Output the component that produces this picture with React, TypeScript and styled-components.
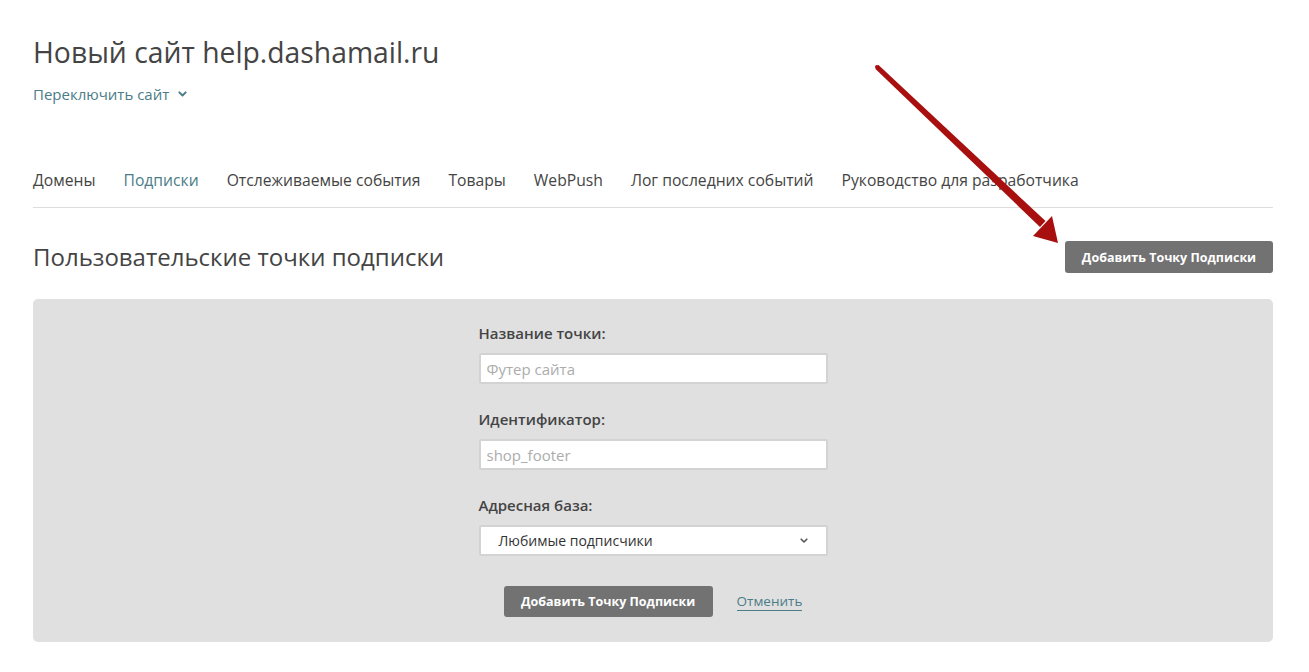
import React from "react";
import styled, { createGlobalStyle } from "styled-components";

const Global = createGlobalStyle`
  html, body { margin: 0; padding: 0; background: #fff; }
  body { font-family: "Open Sans", "Noto Sans", Arial, sans-serif; color: #444; }
  * { box-sizing: border-box; }
`;

const Page = styled.div`
  position: relative;
  padding: 34px 36px 30px 33px;
  min-height: 672px;
`;

const Title = styled.h1`
  margin: 0;
  font-size: 28.3px;
  line-height: 36px;
  font-weight: 400;
  color: #444;
`;

const Switch = styled.a`
  display: inline-flex;
  align-items: center;
  gap: 9px;
  margin-top: 14px;
  font-size: 15px;
  line-height: 20px;
  color: #4b7c88;
  text-decoration: none;
  cursor: pointer;
`;

const Nav = styled.nav`
  display: flex;
  gap: 28px;
  margin-top: 64px;
  padding-bottom: 16px;
  border-bottom: 1px solid #dddddd;
`;

const NavItem = styled.a<{ $active?: boolean }>`
  font-size: 15.7px;
  line-height: 22px;
  color: ${(p) => (p.$active ? "#4b7c88" : "#444")};
  text-decoration: none;
  cursor: pointer;
`;

const HeaderRow = styled.div`
  display: flex;
  align-items: center;
  justify-content: space-between;
  margin-top: 33px;
`;

const Heading = styled.h2`
  margin: 0;
  font-size: 24px;
  line-height: 32px;
  font-weight: 400;
  color: #444;
`;

const Button = styled.button<{ $h?: number; $w?: number }>`
  height: ${(p) => p.$h ?? 32}px;
  width: ${(p) => p.$w ?? 208}px;
  padding: 0;
  border: none;
  border-radius: 3px;
  background: #727272;
  color: #fff;
  font-family: "Open Sans", "Noto Sans", Arial, sans-serif;
  font-size: 12.5px;
  font-weight: 700;
  cursor: pointer;
`;

const Panel = styled.div`
  margin-top: 26px;
  background: #e0e0e0;
  border-radius: 5px;
  padding: 24px 0 25px;
  display: flex;
  justify-content: center;
`;

const Form = styled.div`
  width: 349px;
  display: flex;
  flex-direction: column;
`;

const Field = styled.div`
  display: flex;
  flex-direction: column;
  margin-bottom: 25px;
`;

const Label = styled.label`
  font-size: 15px;
  line-height: 20px;
  font-weight: 600;
  color: #444;
  margin-bottom: 10px;
`;

const Input = styled.input`
  display: block;
  height: 31px;
  width: 100%;
  margin: 0;
  border: 2px solid #d3d3d3;
  border-radius: 2px;
  background: #fff;
  padding: 0 6px;
  font-family: "Open Sans", "Noto Sans", Arial, sans-serif;
  font-size: 15px;
  color: #444;
  outline: none;
  &::placeholder { color: #acacac; }
`;

const Select = styled.div`
  height: 31px;
  width: 100%;
  border: 2px solid #d3d3d3;
  border-radius: 2px;
  background: #fff;
  padding: 0 18px 0 18px;
  display: flex;
  align-items: center;
  justify-content: space-between;
  font-size: 14px;
  color: #333;
`;

const Actions = styled.div`
  display: flex;
  justify-content: center;
  align-items: center;
  gap: 24px;
  margin-top: 5px;
`;

const Cancel = styled.a`
  font-size: 13.5px;
  line-height: 18px;
  color: #4b7c88;
  text-decoration: none;
  border-bottom: 1px solid #4b7c88;
  cursor: pointer;
`;

const ArrowLayer = styled.svg`
  position: absolute;
  left: 0;
  top: 0;
  pointer-events: none;
`;

const Chevron = ({ size = 9, color = "#4b7c88", w = 2 }: { size?: number; color?: string; w?: number }) => (
  <svg width={size} height={size * 0.7} viewBox="0 0 10 7">
    <polyline points="1.5,1.5 5,5 8.5,1.5" fill="none" stroke={color} strokeWidth={w * 1.1} strokeLinecap="round" strokeLinejoin="round" />
  </svg>
);

export default function App() {
  const navItems = [
    "Домены",
    "Подписки",
    "Отслеживаемые события",
    "Товары",
    "WebPush",
    "Лог последних событий",
    "Руководство для разработчика",
  ];
  return (
    <>
      <Global />
      <Page>
        <Title>Новый сайт help.dashamail.ru</Title>
        <Switch>
          Переключить сайт <Chevron />
        </Switch>
        <Nav>
          {navItems.map((n) => (
            <NavItem key={n} $active={n === "Подписки"}>
              {n}
            </NavItem>
          ))}
        </Nav>
        <HeaderRow>
          <Heading>Пользовательские точки подписки</Heading>
          <Button>Добавить Точку Подписки</Button>
        </HeaderRow>
        <Panel>
          <Form>
            <Field>
              <Label>Название точки:</Label>
              <Input placeholder="Футер сайта" />
            </Field>
            <Field>
              <Label>Идентификатор:</Label>
              <Input placeholder="shop_footer" />
            </Field>
            <Field>
              <Label>Адресная база:</Label>
              <Select>
                <span>Любимые подписчики</span>
                <Chevron size={8} color="#555" w={1.8} />
              </Select>
            </Field>
            <Actions>
              <Button $h={31} $w={209}>Добавить Точку Подписки</Button>
              <Cancel>Отменить</Cancel>
            </Actions>
          </Form>
        </Panel>
        <ArrowLayer width="1309" height="672">
          <polygon points="875.5,69 878.5,65 1045.5,221 1040,227" fill="#a80f0f" />
          <circle cx="877" cy="67" r="2" fill="#a80f0f" />
          <polygon points="1033,236 1052,216 1058,243" fill="#a80f0f" />
        </ArrowLayer>
      </Page>
    </>
  );
}
